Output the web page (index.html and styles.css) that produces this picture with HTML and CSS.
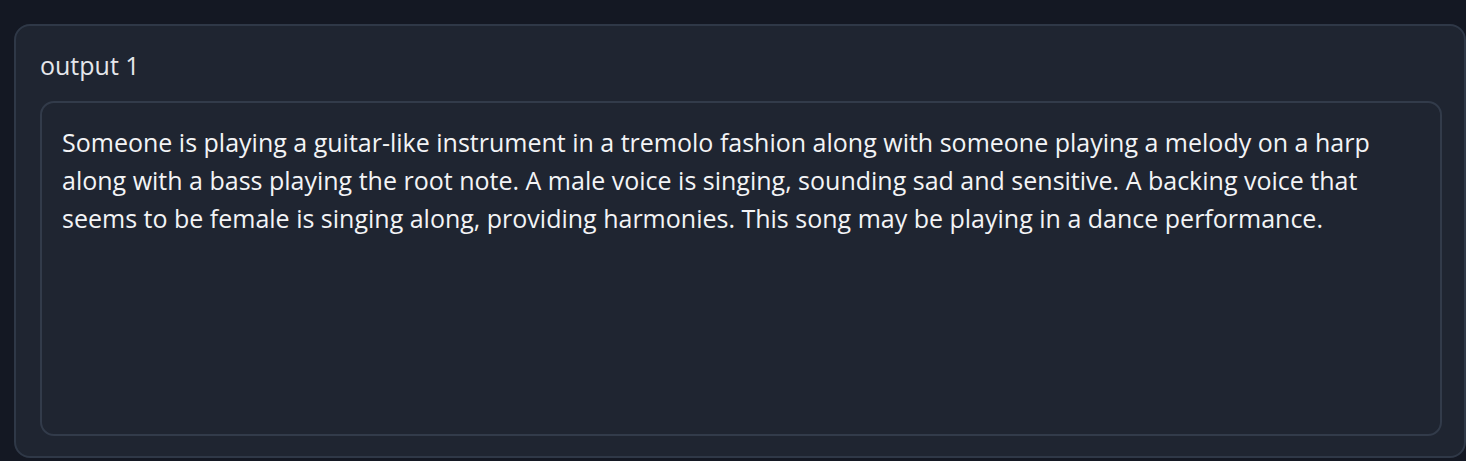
FILE: index.html
```html
<!DOCTYPE html>
<html lang="en">
<head>
    <meta charset="UTF-8">
    <title>output 1</title>
    <link rel="stylesheet" href="styles.css">
</head>
<body>

<div class="block">
    <label class="label">output 1</label>
    <div class="textbox">Someone is playing a guitar-like instrument in a tremolo fashion along with someone playing a melody on a harp along with a bass playing the root note. A male voice is singing, sounding sad and sensitive. A backing voice that seems to be female is singing along, providing harmonies. This song may be playing in a dance performance.</div>
</div>

</body>
</html>
```

FILE: styles.css
```css
body {
    margin: 0;
    padding: 24px 0 0 14px;
    background-color: #141823;
    font-family: "Open Sans", Lato, sans-serif;
    color: #f3f4f6;
    overflow: hidden;
}
.block {
    box-sizing: border-box;
    height: 434px;
    background: #1f2531;
    border: 2px solid #2f3847;
    border-radius: 16px;
    padding: 24px 24px 20px 24px;
    display: flex;
    flex-direction: column;
}
.label {
    font-size: 25px;
    line-height: 30px;
    color: #e5e7eb;
    margin-bottom: 21px;
}
.textbox {
    flex: 1;
    width: 1402px;
    box-sizing: border-box;
    border: 2px solid #323b4a;
    border-radius: 14px;
    padding: 20px 20px;
    font-size: 25px;
    line-height: 38px;
    color: #f3f4f6;
}
```
